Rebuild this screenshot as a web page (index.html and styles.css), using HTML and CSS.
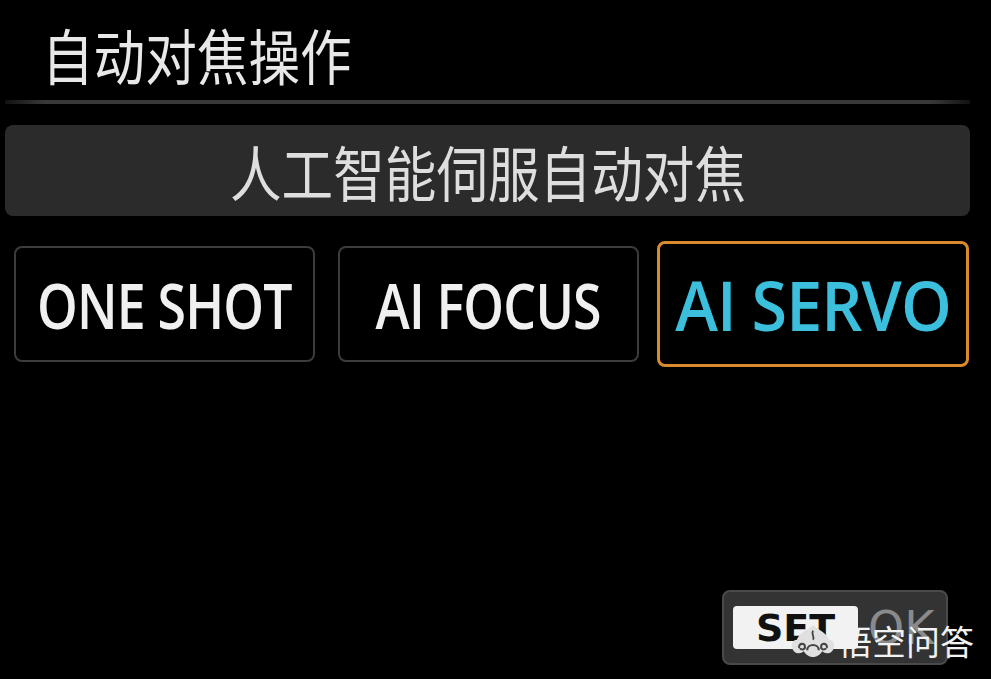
FILE: index.html
```html
<!DOCTYPE html>
<html lang="zh-CN">
<head>
  <meta charset="UTF-8">
  <title>自动对焦操作</title>
  <link rel="stylesheet" href="styles.css">
</head>
<body>
  <div class="screen">
    <div class="title"><span class="narrow">自动对焦操作</span></div>
    <div class="rule"></div>
    <div class="current"><span class="narrow">人工智能伺服自动对焦</span></div>

    <div class="modes">
      <div class="mode"><span class="narrow">ONE SHOT</span></div>
      <div class="mode"><span class="narrow">AI FOCUS</span></div>
      <div class="mode selected"><span class="narrow">AI SERVO</span></div>
    </div>

    <div class="footer">
      <div class="set-ok">
        <span class="set-key">SET</span>
        <span class="ok">OK</span>
      </div>
    </div>
  </div>

  <!-- watermark sits on top of the button -->
  <div class="watermark">
    <svg width="46" height="40" viewBox="0 0 40 34">
      <path d="M20 3 C14 8 8 10 6 16 C3 16 1 19 2 23 C3 28 9 29 12 26 C14 30 18 31 20 31 C22 31 26 30 28 26 C31 29 37 28 38 23 C39 19 37 16 34 16 C32 10 26 8 20 3 Z" fill="#e0e0e0"/>
      <path d="M8 23 C7 19 13 18 13 22 C13 25 9 25 9 23" stroke="#444" stroke-width="1.8" fill="none"/>
      <path d="M32 23 C33 19 27 18 27 22 C27 25 31 25 31 23" stroke="#444" stroke-width="1.8" fill="none"/>
      <path d="M15 25 C15 19 25 19 25 25" stroke="#444" stroke-width="1.8" fill="none"/>
      <path d="M20 8 C18 12 22 13 20 16" stroke="#444" stroke-width="1.6" fill="none"/>
    </svg>
    <span>悟空问答</span>
  </div>
</body>
</html>
```

FILE: styles.css
```css
body {
  margin: 0;
  background-color: #000;
  font-family: "Noto Sans CJK SC", sans-serif;
  color: #e6e6e6;
}
.screen {
  width: 965px;
  height: 679px;
  padding-left: 5px;
  display: flex;
  flex-direction: column;
}
.narrow {
  display: inline-block;
  transform: scaleX(0.86);
}
.title {
  font-size: 60px;
  line-height: 64px;
  padding-top: 22px;
  margin-left: 37px;
  color: #e8e8e8;
}
.title .narrow {
  transform-origin: left center;
}
.rule {
  height: 4px;
  margin-top: 14px;
  background: linear-gradient(to right, #111 0%, #383838 4%, #383838 96%, #111 100%);
}
.current {
  height: 91px;
  margin-top: 21px;
  background-color: #2b2b2b;
  border-radius: 8px;
  display: flex;
  align-items: center;
  justify-content: center;
  font-size: 60px;
  line-height: 64px;
  color: #dedede;
}
.modes {
  display: flex;
  align-items: center;
  margin-top: 25px;
  padding-left: 9px;
}
.mode {
  width: 297px;
  height: 112px;
  border: 2px solid #3c3c3c;
  border-radius: 8px;
  display: flex;
  align-items: center;
  justify-content: center;
  font-family: "Open Sans", sans-serif;
  font-weight: 600;
  font-size: 64px;
  letter-spacing: -1px;
  color: #f0f0f0;
  margin-right: 23px;
  white-space: nowrap;
}
.mode .narrow {
  transform: scaleX(0.81);
}
.mode.selected {
  width: 306px;
  height: 120px;
  border: 3px solid #d98b2b;
  margin-right: 0;
  margin-left: -5px;
  color: #3bbfdc;
  font-size: 68px;
}
.mode.selected .narrow {
  transform: scaleX(0.95);
}
.footer {
  display: flex;
  justify-content: flex-end;
  margin-top: auto;
  margin-bottom: 14px;
  padding-right: 22px;
}
.set-ok {
  width: 226px;
  height: 75px;
  background-color: #333;
  border: 2px solid #4a4a4a;
  border-radius: 8px;
  display: flex;
  align-items: center;
  padding-left: 9px;
  box-sizing: border-box;
}
.set-key {
  width: 125px;
  height: 43px;
  background-color: #f2f2f2;
  border-radius: 4px;
  color: #111;
  font-family: "DejaVu Sans", sans-serif;
  font-weight: bold;
  font-size: 38px;
  display: flex;
  align-items: center;
  justify-content: center;
}
.ok {
  margin-left: 10px;
  font-family: "DejaVu Sans", sans-serif;
  font-size: 46px;
  color: #8a8a8a;
}
.watermark {
  position: absolute;
  left: 790px;
  top: 620px;
  display: flex;
  align-items: center;
  color: #f2f2f2;
  font-size: 34px;
  line-height: 42px;
}
.watermark svg {
  margin-right: 2px;
}
```
